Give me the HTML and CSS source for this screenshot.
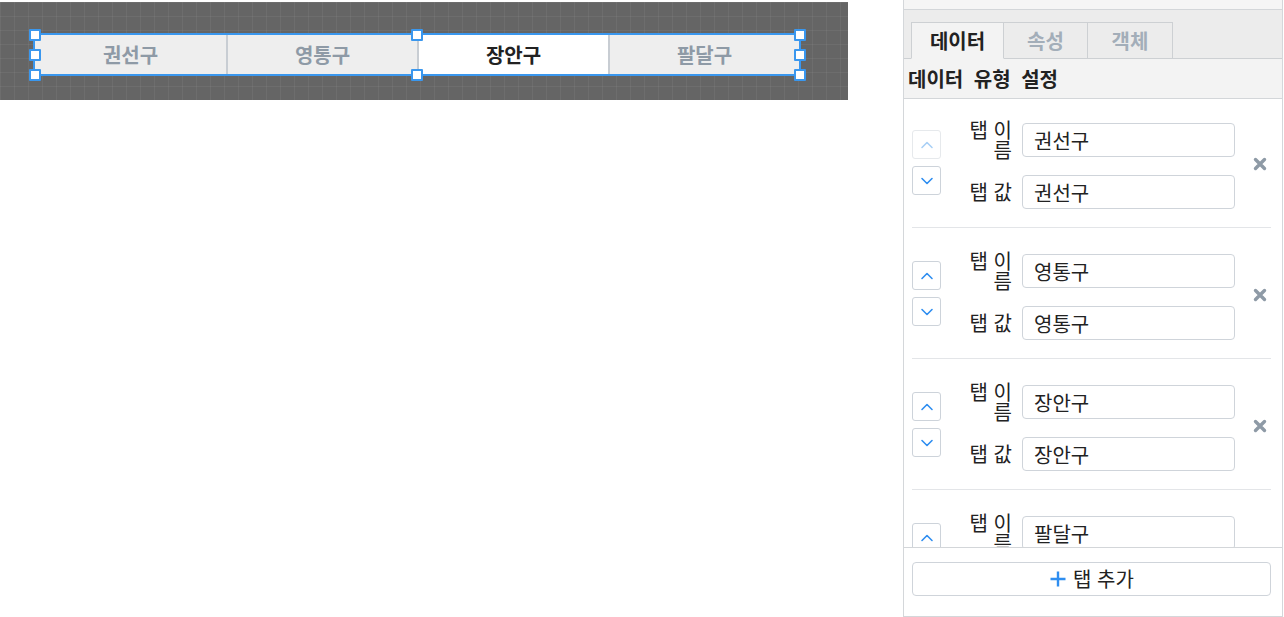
FILE: index.html
```html
<!DOCTYPE html>
<html lang="ko">
<head>
<meta charset="utf-8">
<link rel="stylesheet" href="styles.css">
</head>
<body>
<div class="app">
  <div class="stage">
    <div class="canvas">
      <div class="widget">
        <div class="wtab">권선구</div>
        <div class="wtab">영통구</div>
        <div class="wtab active">장안구</div>
        <div class="wtab">팔달구</div>
        <span class="handle h-tl"></span>
        <span class="handle h-tm"></span>
        <span class="handle h-tr"></span>
        <span class="handle h-ml"></span>
        <span class="handle h-mr"></span>
        <span class="handle h-bl"></span>
        <span class="handle h-bm"></span>
        <span class="handle h-br"></span>
      </div>
    </div>
  </div>
  <aside class="panel">
    <div class="panel-top"></div>
    <div class="ptabs">
      <div class="ptab active t1">데이터</div>
      <div class="ptab t2">속성</div>
      <div class="ptab t3">객체</div>
    </div>
    <div class="subhead">데이터 유형 설정</div>
    <div class="list">
      <div class="item">
        <div class="arrows">
          <button class="arrow disabled"><svg viewBox="0 0 14 14" width="14" height="14"><path d="M2 9.5 L7 4.5 L12 9.5" /></svg></button>
          <button class="arrow"><svg viewBox="0 0 14 14" width="14" height="14"><path d="M2 4.5 L7 9.5 L12 4.5" /></svg></button>
        </div>
        <div class="fields">
          <div class="row name"><div class="label">탭 이름</div><div class="input">권선구</div></div>
          <div class="row"><div class="label">탭 값</div><div class="input">권선구</div></div>
        </div>
        <svg class="del" viewBox="0 0 14 14" width="14" height="14"><path d="M2.5 2.5 L11.5 11.5 M11.5 2.5 L2.5 11.5" /></svg>
      </div>
      <div class="item">
        <div class="arrows">
          <button class="arrow"><svg viewBox="0 0 14 14" width="14" height="14"><path d="M2 9.5 L7 4.5 L12 9.5" /></svg></button>
          <button class="arrow"><svg viewBox="0 0 14 14" width="14" height="14"><path d="M2 4.5 L7 9.5 L12 4.5" /></svg></button>
        </div>
        <div class="fields">
          <div class="row name"><div class="label">탭 이름</div><div class="input">영통구</div></div>
          <div class="row"><div class="label">탭 값</div><div class="input">영통구</div></div>
        </div>
        <svg class="del" viewBox="0 0 14 14" width="14" height="14"><path d="M2.5 2.5 L11.5 11.5 M11.5 2.5 L2.5 11.5" /></svg>
      </div>
      <div class="item">
        <div class="arrows">
          <button class="arrow"><svg viewBox="0 0 14 14" width="14" height="14"><path d="M2 9.5 L7 4.5 L12 9.5" /></svg></button>
          <button class="arrow"><svg viewBox="0 0 14 14" width="14" height="14"><path d="M2 4.5 L7 9.5 L12 4.5" /></svg></button>
        </div>
        <div class="fields">
          <div class="row name"><div class="label">탭 이름</div><div class="input">장안구</div></div>
          <div class="row"><div class="label">탭 값</div><div class="input">장안구</div></div>
        </div>
        <svg class="del" viewBox="0 0 14 14" width="14" height="14"><path d="M2.5 2.5 L11.5 11.5 M11.5 2.5 L2.5 11.5" /></svg>
      </div>
      <div class="item">
        <div class="arrows">
          <button class="arrow"><svg viewBox="0 0 14 14" width="14" height="14"><path d="M2 9.5 L7 4.5 L12 9.5" /></svg></button>
          <button class="arrow"><svg viewBox="0 0 14 14" width="14" height="14"><path d="M2 4.5 L7 9.5 L12 4.5" /></svg></button>
        </div>
        <div class="fields">
          <div class="row name"><div class="label">탭 이름</div><div class="input">팔달구</div></div>
          <div class="row"><div class="label">탭 값</div><div class="input">팔달구</div></div>
        </div>
        <svg class="del" viewBox="0 0 14 14" width="14" height="14"><path d="M2.5 2.5 L11.5 11.5 M11.5 2.5 L2.5 11.5" /></svg>
      </div>
    </div>
    <div class="footer">
      <button class="add"><svg class="plus" viewBox="0 0 18 18" width="18" height="18"><path d="M9 1.5 V16.5 M1.5 9 H16.5" /></svg><span class="add-text">탭 추가</span></button>
    </div>
  </aside>
</div>
</body>
</html>
```

FILE: styles.css
```css
* { box-sizing: border-box; }
html, body { margin: 0; padding: 0; background: #fff; }
body {
  font-family: "Noto Sans CJK KR", "Noto Sans", sans-serif;
  color: #222;
  width: 1284px;
  height: 617px;
  overflow: hidden;
}
.app { display: flex; align-items: flex-start; }
.stage { width: 903px; padding-top: 2px; }
.canvas {
  width: 848px;
  height: 98px;
  padding: 31px 0 0 33px;
  background-color: #656565;
  background-image:
    linear-gradient(to right, rgba(255,255,255,0.05) 1px, transparent 1px),
    linear-gradient(to bottom, rgba(255,255,255,0.05) 1px, transparent 1px);
  background-size: 14px 14px;
}
.widget {
  position: relative;
  width: 768px;
  height: 43px;
  border: 2px solid #3a97ee;
  display: flex;
  background: #eeeeee;
}
.wtab {
  width: 25%;
  display: flex;
  align-items: center;
  justify-content: center;
  font-size: 20px;
  font-weight: 700;
  color: #8e9aa6;
  background: #eeeeee;
}
.wtab + .wtab { border-left: 2px solid #c8cdd3; }
.wtab.active { background: #fff; color: #222; }
.handle {
  position: absolute;
  width: 12px;
  height: 12px;
  background: #fff;
  border: 2px solid #3a97ee;
  border-radius: 1px;
}
.h-tl { left: -6px; top: -6px; }
.h-tm { left: calc(50% - 6px); top: -6px; }
.h-tr { right: -7px; top: -6px; }
.h-ml { left: -6px; top: calc(50% - 6px); }
.h-mr { right: -7px; top: calc(50% - 6px); }
.h-bl { left: -6px; bottom: -7px; }
.h-bm { left: calc(50% - 6px); bottom: -7px; }
.h-br { right: -7px; bottom: -7px; }

.panel {
  width: 380px;
  height: 617px;
  border: 1px solid #d4d7da;
  border-top: none;
  display: flex;
  flex-direction: column;
  background: #fff;
}
.panel-top {
  height: 10px;
  background: #f5f5f5;
  border-bottom: 1px solid #d3d6d9;
  flex: none;
}
.ptabs {
  flex: none;
  height: 49px;
  padding: 12px 0 0 7px;
  background: #ececec;
  border-bottom: 1px solid #cdd0d3;
  display: flex;
  align-items: flex-end;
}
.ptab {
  height: 37px;
  margin-bottom: -1px;
  border: 1px solid #cdd0d3;
  border-left: none;
  display: flex;
  align-items: center;
  justify-content: center;
  font-size: 20px;
  font-weight: 700;
  color: #a3aeb9;
  background: #ececec;
}
.ptab.t1 { width: 93px; border-left: 1px solid #cdd0d3; }
.ptab.t2 { width: 84px; }
.ptab.t3 { width: 85px; }
.ptab.active { background: #f3f3f3; color: #222; border-bottom-color: #f3f3f3; }
.subhead {
  flex: none;
  height: 40px;
  padding-left: 4px;
  background: #f3f3f3;
  border-bottom: 1px solid #d3d6d9;
  display: flex;
  align-items: center;
  font-size: 20px;
  font-weight: 700;
  word-spacing: 5px;
  color: #222;
}
.list { flex: 1; overflow: hidden; }
.item {
  display: flex;
  align-items: center;
  margin: 0 11px 0 8px;
  padding: 23px 0 18px;
  border-bottom: 1px solid #e3e5e8;
}
.item:first-child { padding-top: 21px; }
.arrows { display: flex; flex-direction: column; gap: 7px; width: 29px; margin-top: -4px; }
.arrow {
  width: 29px;
  height: 29px;
  padding: 0;
  border: 1.5px solid #cdd3da;
  border-radius: 3px;
  background: #fff;
  display: flex;
  align-items: center;
  justify-content: center;
}
.arrow svg path { fill: none; stroke: #2f8ef0; stroke-width: 1.6; stroke-linecap: round; stroke-linejoin: round; }
.arrow.disabled { border-color: #e6e9ec; }
.arrow.disabled svg path { stroke: #a9d0f6; }
.fields { margin-left: 25px; display: flex; flex-direction: column; gap: 15px; }
.row { display: flex; align-items: center; height: 34px; }
.row.name { height: 40px; }
.label {
  width: 46px;
  margin-right: 10px;
  text-align: right;
  font-size: 20px;
  line-height: 20px;
  color: #222;
}
.input {
  width: 213px;
  height: 34px;
  border: 1.5px solid #cfd4da;
  border-radius: 4px;
  padding-left: 11px;
  display: flex;
  align-items: center;
  font-size: 20px;
  color: #222;
}
.del { margin-left: 18px; flex: none; margin-top: -2px; }
.del path { stroke: #8e9aa6; stroke-width: 3.4; stroke-linecap: round; fill: none; }
.footer {
  flex: none;
  border-top: 1px solid #d3d6d9;
  padding: 14px 11px 20px 8px;
}
.add {
  width: 100%;
  height: 34px;
  border: 1.5px solid #cfd4da;
  border-radius: 4px;
  background: #fff;
  display: flex;
  align-items: center;
  justify-content: center;
  gap: 6px;
  font-family: inherit;
  font-size: 20px;
  line-height: 24px;
  color: #222;
  padding: 0;
}
.plus { flex: none; }
.plus path { stroke: #2f8ef0; stroke-width: 2.4; fill: none; }
```
